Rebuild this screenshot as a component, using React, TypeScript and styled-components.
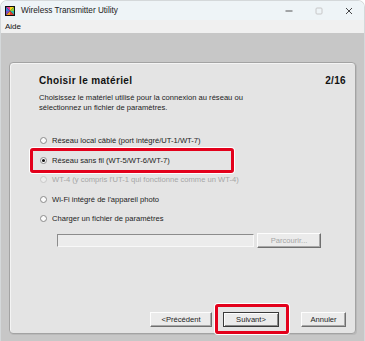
import styled, { createGlobalStyle } from 'styled-components';

const Global = createGlobalStyle`
  html, body {
    margin: 0;
    padding: 0;
    background: #ffffff;
  }
  body {
    font-family: 'Liberation Sans', Arial, sans-serif;
  }
`;

const Window = styled.div`
  width: 365px;
  height: 341px;
  display: flex;
  flex-direction: column;
  border-radius: 7px 7px 0 0;
  overflow: hidden;
  box-sizing: border-box;
  border: 1px solid #d4d8da;
  border-bottom: none;
`;

const TitleBar = styled.div`
  height: 19px;
  background: #eef4f7;
  display: flex;
  align-items: center;
  padding-left: 4px;
  font-size: 8.2px;
  color: #1b1b1b;
`;

const AppIcon = styled.svg`
  width: 10px;
  height: 10px;
  margin-right: 6px;
  flex-shrink: 0;
`;

const TitleText = styled.span`
  flex: 1;
`;

const WinButton = styled.div<{ $dim?: boolean }>`
  width: 30px;
  height: 19px;
  display: flex;
  align-items: center;
  justify-content: center;
`;

const MenuBar = styled.div`
  height: 13px;
  background: #f0f0f0;
  display: flex;
  align-items: center;
  padding-left: 4px;
  font-size: 8px;
  color: #111;
`;

const Client = styled.div`
  flex: 1;
  background: #c7c7c7;
  padding: 29px 8px 7px 8px;
  display: flex;
`;

const Panel = styled.div`
  flex: 1;
  background: #e4e4e4;
  border: 1px solid #a3a3a3;
  border-radius: 4px;
  box-shadow: inset 1px 1px 0 #f4f4f4, 1px 1px 0 #b9b9b9;
  padding: 11px 9px 6px 29px;
  display: flex;
  flex-direction: column;
  font-size: 7.6px;
  color: #1c1c1c;
`;

const Header = styled.div`
  display: flex;
  justify-content: space-between;
  align-items: center;
  height: 12px;
`;

const Heading = styled.div`
  font-weight: bold;
  font-size: 10px;
  letter-spacing: 0.35px;
  color: #111;
`;

const Desc = styled.div`
  margin-top: 7px;
  line-height: 10px;
`;

const Options = styled.div`
  margin-top: 18px;
  display: flex;
  flex-direction: column;
`;

const OptionRow = styled.label<{ $disabled?: boolean }>`
  position: relative;
  height: 19.5px;
  display: flex;
  align-items: center;
  color: ${(p) => (p.$disabled ? '#a6a6a6' : '#1c1c1c')};
`;

const Radio = styled.span<{ $checked?: boolean; $disabled?: boolean }>`
  width: 7px;
  height: 7px;
  box-sizing: border-box;
  border-radius: 50%;
  border: 1px solid ${(p) => (p.$disabled ? '#c9c9c9' : '#8a8a8a')};
  background: ${(p) => (p.$disabled ? '#ececec' : '#fbfbfb')};
  margin-right: 5px;
  margin-left: 1px;
  display: flex;
  align-items: center;
  justify-content: center;
  &::after {
    content: '';
    width: 3px;
    height: 3px;
    border-radius: 50%;
    background: ${(p) => (p.$checked ? '#111' : 'transparent')};
  }
`;

const Highlight = styled.span<{ $top: number; $bottom: number; $left: number; $width: number }>`
  position: absolute;
  top: ${(p) => p.$top}px;
  bottom: ${(p) => p.$bottom}px;
  left: ${(p) => p.$left}px;
  width: ${(p) => p.$width}px;
  box-sizing: border-box;
  border: 3px solid #e3001b;
  border-radius: 3px;
  box-shadow: 0 0 0 1px #ffffff;
  pointer-events: none;
`;

const FileRow = styled.div`
  margin-top: 4px;
  margin-left: 18px;
  display: flex;
  align-items: center;
  gap: 3px;
`;

const FileInput = styled.div`
  width: 197px;
  height: 13px;
  box-sizing: border-box;
  background: #ececec;
  border: 1px solid;
  border-color: #8c8c8c #f8f8f8 #f8f8f8 #8c8c8c;
`;

const Spacer = styled.div`
  flex: 1;
`;

const ButtonRow = styled.div`
  display: flex;
  justify-content: flex-end;
  align-items: center;
`;

const Button = styled.div<{ $w: number; $disabled?: boolean; $default?: boolean; $gap?: number }>`
  position: relative;
  width: ${(p) => p.$w}px;
  height: 15px;
  box-sizing: border-box;
  margin-left: ${(p) => p.$gap ?? 0}px;
  background: #ebebeb;
  border: 1px solid;
  border-color: ${(p) => (p.$default ? '#3a3a3a' : '#fdfdfd #6f6f6f #6f6f6f #fdfdfd')};
  box-shadow: ${(p) =>
    p.$default ? 'inset 1px 1px 0 #fdfdfd, inset -1px -1px 0 #8a8a8a' : 'inset -1px -1px 0 #a9a9a9'};
  display: flex;
  align-items: center;
  justify-content: center;
  white-space: nowrap;
  font-size: 7.6px;
  color: ${(p) => (p.$disabled ? '#a6a6a6' : '#1c1c1c')};
`;

const options = [
  { label: 'Réseau local câblé (port intégré/UT-1/WT-7)' },
  { label: 'Réseau sans fil (WT-5/WT-6/WT-7)', checked: true, marked: true },
  { label: "WT-4 (y compris l'UT-1 qui fonctionne comme un WT-4)", disabled: true },
  { label: "Wi-Fi intégré de l'appareil photo" },
  { label: 'Charger un fichier de paramètres' },
];

const App = () => {
  return (
    <>
      <Global />
      <Window>
        <TitleBar>
          <AppIcon viewBox="0 0 10 10">
            <rect width="10" height="10" fill="#111" />
            <path d="M5 5 L1 1 L5 1 Z" fill="#e83a8c" />
            <path d="M5 5 L5 1 L9 1 Z" fill="#f7d21c" />
            <path d="M5 5 L9 1 L9 5 Z" fill="#8ccf3c" />
            <path d="M5 5 L9 5 L9 9 Z" fill="#2fb5a8" />
            <path d="M5 5 L9 9 L5 9 Z" fill="#e33b2b" />
            <path d="M5 5 L5 9 L1 9 Z" fill="#f39a1e" />
            <path d="M5 5 L1 9 L1 5 Z" fill="#7d4fc4" />
            <path d="M5 5 L1 5 L1 1 Z" fill="#3b7ee0" />
          </AppIcon>
          <TitleText>Wireless Transmitter Utility</TitleText>
          <WinButton>
            <svg width="8" height="8" viewBox="0 0 8 8">
              <line x1="0.5" y1="4" x2="7.5" y2="4" stroke="#444" strokeWidth="0.9" />
            </svg>
          </WinButton>
          <WinButton $dim>
            <svg width="8" height="8" viewBox="0 0 8 8">
              <rect x="1" y="1" width="6" height="6" rx="1" fill="none" stroke="#c2c2c2" strokeWidth="0.9" />
            </svg>
          </WinButton>
          <WinButton>
            <svg width="8" height="8" viewBox="0 0 8 8">
              <path d="M1 1 L7 7 M7 1 L1 7" stroke="#333" strokeWidth="0.9" />
            </svg>
          </WinButton>
        </TitleBar>
        <MenuBar>Aide</MenuBar>
        <Client>
          <Panel>
            <Header>
              <Heading>Choisir le matériel</Heading>
              <Heading>2/16</Heading>
            </Header>
            <Desc>
              Choisissez le matériel utilisé pour la connexion au réseau ou
              <br />
              sélectionnez un fichier de paramètres.
            </Desc>
            <Options>
              {options.map((o) => (
                <OptionRow key={o.label} $disabled={o.disabled}>
                  <Radio $checked={o.checked} $disabled={o.disabled} />
                  {o.label}
                  {o.marked && <Highlight $top={-3} $bottom={-3} $left={-9} $width={204} />}
                </OptionRow>
              ))}
            </Options>
            <FileRow>
              <FileInput />
              <Button $w={64} $disabled>
                Parcourir...
              </Button>
            </FileRow>
            <Spacer />
            <ButtonRow>
              <Button $w={62}>&lt;Précédent</Button>
              <Button $w={56} $gap={11} $default>
                Suivant&gt;
                <Highlight $top={-9} $bottom={-8} $left={-9} $width={74} />
              </Button>
              <Button $w={45} $gap={22}>
                Annuler
              </Button>
            </ButtonRow>
          </Panel>
        </Client>
      </Window>
    </>
  );
};

export default App;
